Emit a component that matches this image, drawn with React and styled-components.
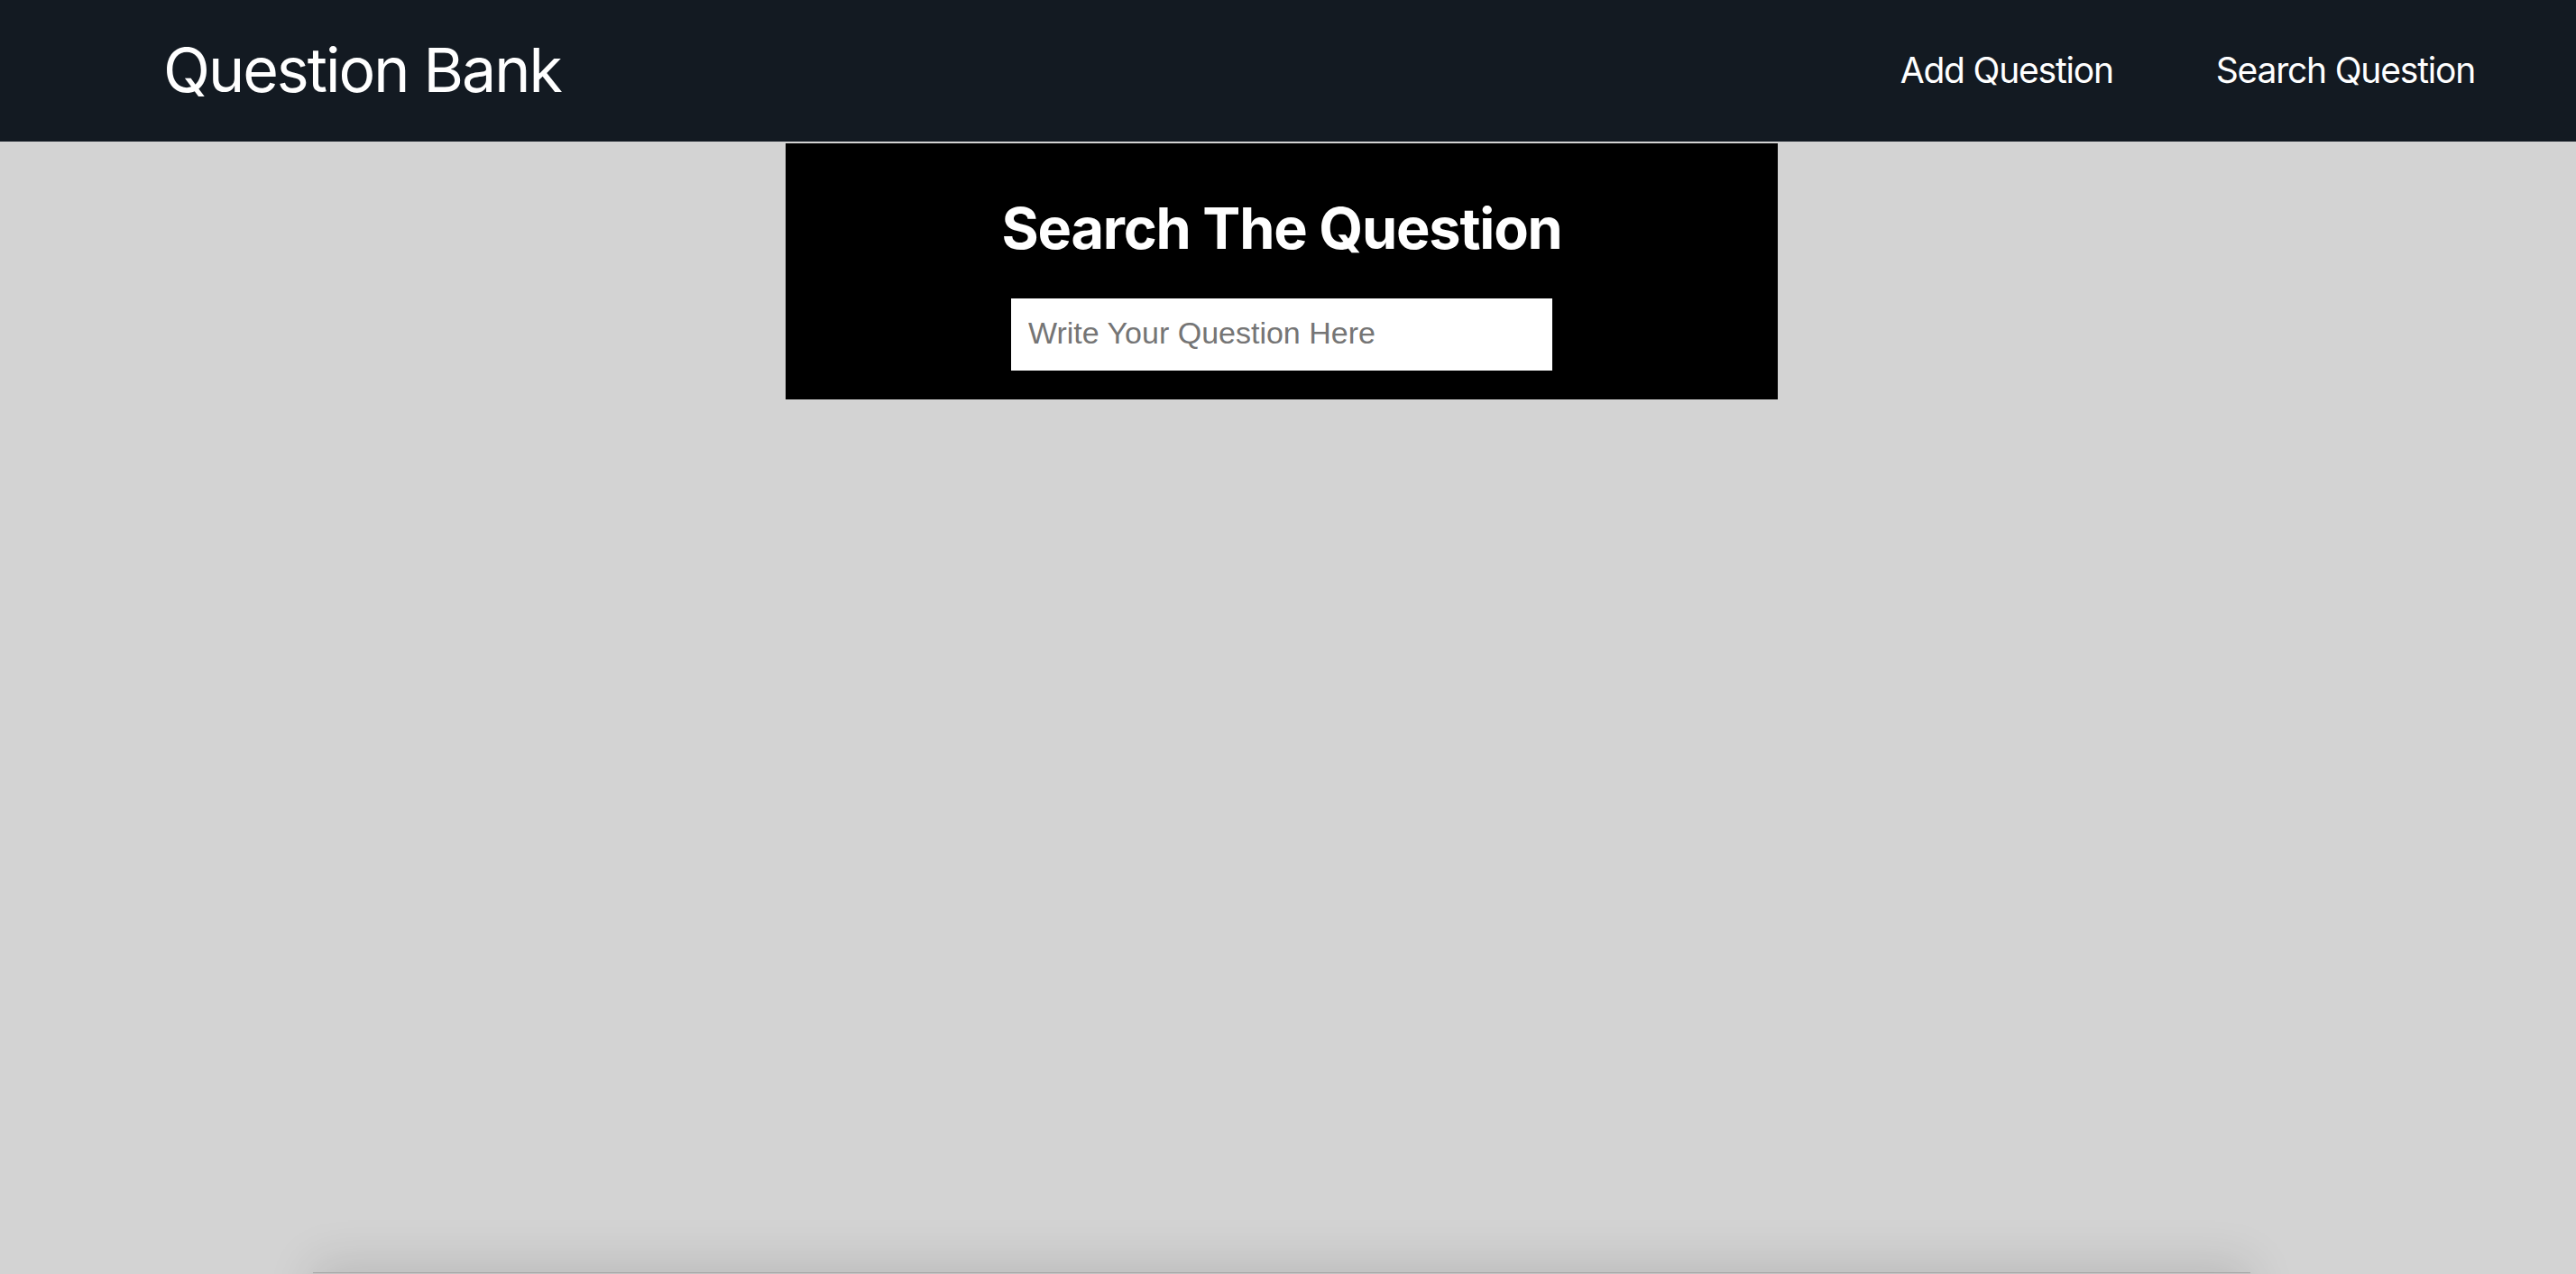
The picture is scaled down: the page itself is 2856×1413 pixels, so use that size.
import React from "react";
import styled, { createGlobalStyle } from "styled-components";

const Global = createGlobalStyle`
  html, body { margin: 0; padding: 0; background: #d3d3d3; }
  body { font-family: Inter, "Noto Sans", sans-serif; overflow: hidden; }
  * { box-sizing: border-box; }
`;

const Page = styled.div`
  min-height: 1413px;
  background: #d3d3d3;
  display: flex;
  flex-direction: column;
`;

const NavBar = styled.nav`
  height: 157px;
  background: #131a22;
  display: flex;
  align-items: center;
  justify-content: space-between;
  padding: 0 112px 3px 181px;
`;

const Brand = styled.div`
  font-family: Inter, sans-serif;
  font-size: 68px;
  font-weight: 400;
  color: #ffffff;
  letter-spacing: -2px;
`;

const NavLinks = styled.div`
  display: flex;
  align-items: center;
  gap: 114px;
`;

const NavLink = styled.a`
  font-family: Inter, sans-serif;
  font-size: 39px;
  font-weight: 400;
  color: #ffffff;
  text-decoration: none;
  letter-spacing: -1.2px;
`;

const Main = styled.main`
  display: flex;
  flex-direction: column;
  align-items: center;
  padding-right: 14px;
`;

const SearchPanel = styled.section`
  width: 1100px;
  margin-top: 2px;
  background: #000000;
  padding: 56px 0 32px;
  display: flex;
  flex-direction: column;
  align-items: center;
`;

const Heading = styled.h1`
  margin: 0 0 39px;
  font-family: Inter, sans-serif;
  font-size: 63px;
  line-height: 77px;
  font-weight: 700;
  color: #ffffff;
  letter-spacing: -1.2px;
`;

const SearchInput = styled.input`
  width: 600px;
  height: 80px;
  border: none;
  outline: none;
  padding: 0 19px 3px;
  font-family: "Liberation Sans", Arial, sans-serif;
  font-size: 34px;
  color: #000;
  background: #fff;
  &::placeholder { color: #757575; }
`;

const ResultCard = styled.div`
  width: 2148px;
  height: 400px;
  margin-top: 968px;
  background: #c4c4c4;
  border-top: 1px solid #a8a8a8;
  box-shadow: 0 -10px 50px rgba(0, 0, 0, 0.12);
  flex-shrink: 0;
`;

export default function App() {
  return (
    <>
      <Global />
      <Page>
        <NavBar>
          <Brand>Question Bank</Brand>
          <NavLinks>
            <NavLink href="#">Add Question</NavLink>
            <NavLink href="#">Search Question</NavLink>
          </NavLinks>
        </NavBar>
        <Main>
          <SearchPanel>
            <Heading>Search The Question</Heading>
            <SearchInput placeholder="Write Your Question Here" />
          </SearchPanel>
          <ResultCard />
        </Main>
      </Page>
    </>
  );
}
